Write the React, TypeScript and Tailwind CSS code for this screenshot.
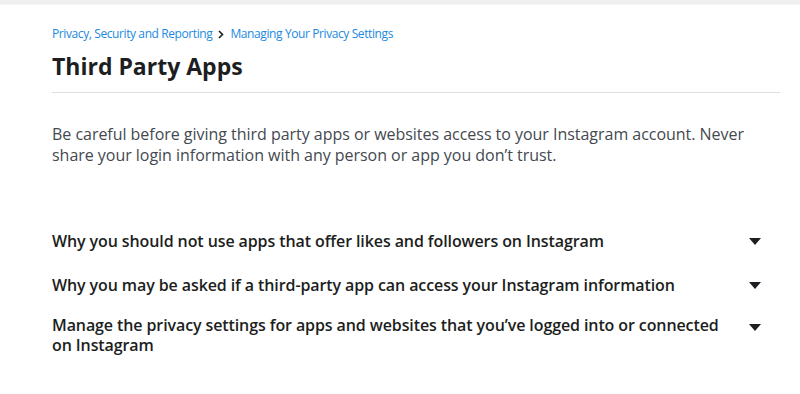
import React from "react";

const questions = [
  "Why you should not use apps that offer likes and followers on Instagram",
  "Why you may be asked if a third-party app can access your Instagram information",
  "Manage the privacy settings for apps and websites that you\u2019ve logged into or connected on Instagram",
];

function Caret() {
  return (
    <svg width="12" height="7" viewBox="0 0 12 7" className="shrink-0">
      <path d="M0 0 H12 L6 7 Z" fill="#1c1e21" />
    </svg>
  );
}

export default function App() {
  return (
    <div
      className="w-[800px] h-[394px] bg-white overflow-hidden"
      style={{ fontFamily: '"Open Sans", "Noto Sans", sans-serif' }}
    >
      <div className="h-[5px] bg-[#f0f0f0] border-b border-[#f5f5f5]" />
      <div className="pl-[52px] w-[780px]">
        <div className="pt-[21px] flex items-center gap-[6px] text-[12px] leading-[16px] text-[#1b8ae0] tracking-[-0.4px]">
          <span>Privacy, Security and Reporting</span>
          <svg width="6" height="9" viewBox="0 0 6 9">
            <path d="M1 1 L4.5 4.5 L1 8" stroke="#1c1e21" strokeWidth="1.6" fill="none" />
          </svg>
          <span>Managing Your Privacy Settings</span>
        </div>
        <h1 className="mt-[9px] text-[23px] leading-[30px] font-bold text-[#1c1e21] tracking-[0px]">
          Third Party Apps
        </h1>
        <div className="mt-[11px] h-px bg-[#dddfe2]" />
        <p className="mt-[31px] text-[16px] leading-[21px] text-[#444950] tracking-[-0.03px] pr-[10px]">
          Be careful before giving third party apps or websites access to your Instagram account. Never share your
          login information with any person or app you don{"\u2019"}t trust.
        </p>
        <div className="mt-[65px] flex flex-col">
          {questions.map((q, i) => (
            <div
              key={i}
              className={`flex items-start justify-between ${i === 0 ? "" : i === 1 ? "mt-[24px]" : "mt-[20px]"}`}
            >
              <span className="text-[16px] leading-[20px] font-semibold text-[#1c1e21] tracking-[-0.1px] w-[680px]">
                {q}
              </span>
              <span className={i === 2 ? "mt-[9px] mr-[19px]" : "mt-[7px] mr-[19px]"}>
                <Caret />
              </span>
            </div>
          ))}
        </div>
      </div>
    </div>
  );
}
